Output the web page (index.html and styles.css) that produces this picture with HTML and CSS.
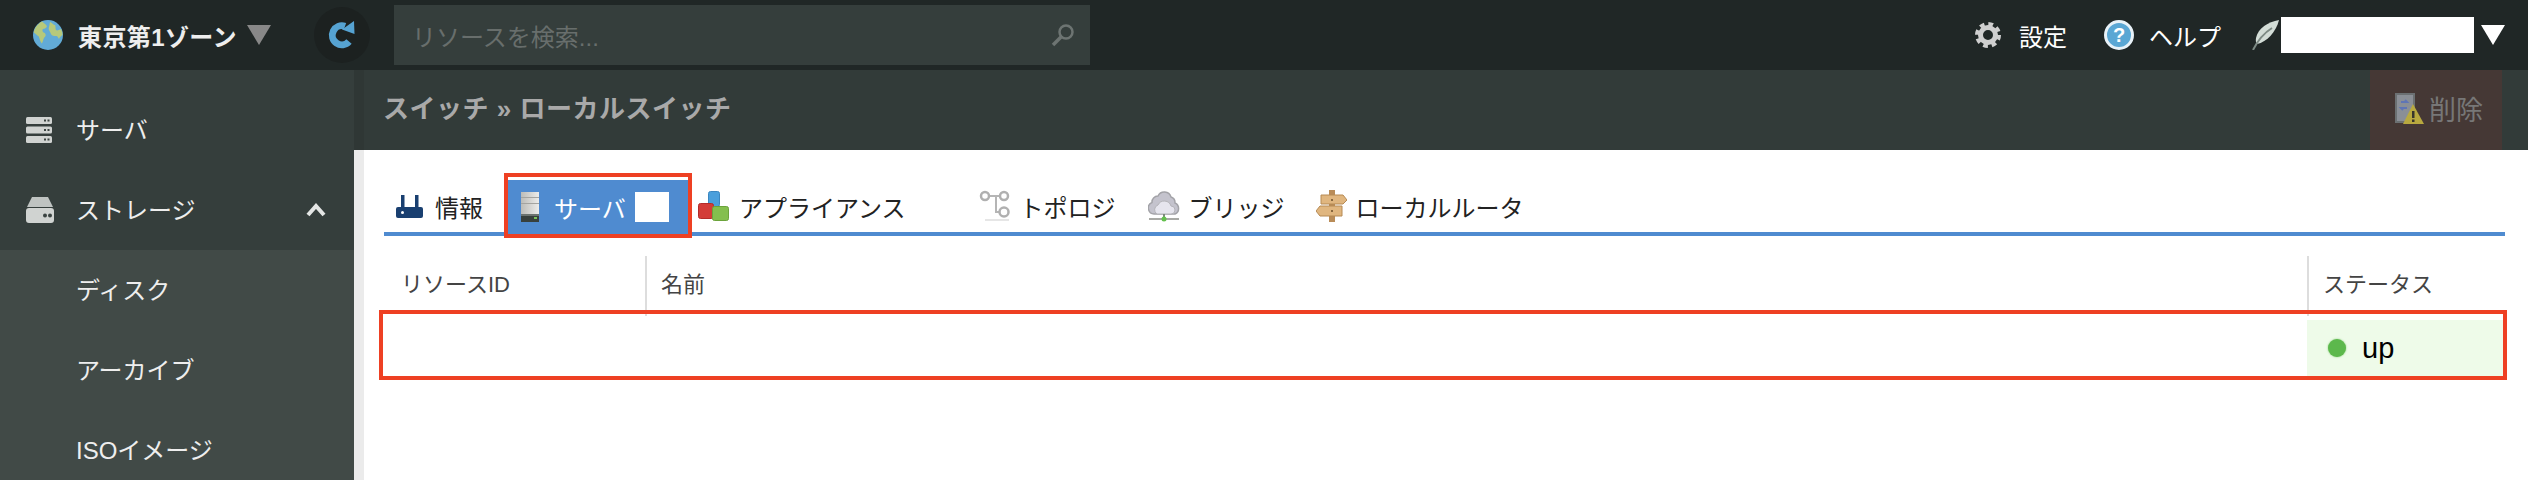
FILE: index.html
```html
<!DOCTYPE html>
<html lang="ja">
<head>
  <meta charset="UTF-8" />
  <title>ローカルスイッチ</title>
  <link rel="stylesheet" href="styles.css">
</head>
<body>
  <header class="topbar">
    <div class="zone">
      <svg class="globe" width="30" height="30" viewBox="0 0 30 30">
        <circle cx="15" cy="15" r="15" fill="#62abd6"/>
        <path d="M9 1.500C5 3.500 1.500 8 .8 12.500c2 1 3 3 5 4 1 2 1 5 3 7 1.500-2 1-4 2.500-6 1.500-1 2-3 .5-4.500-2-.5-3-2-2-4 2 0 2.500-1 4-2 .5-2-2-3-4.800-5.500z" fill="#b7c97a"/>
        <path d="M17 2c3 1 3 3 5 3 1 2 0 3 1 5 1 1 3 0 5-1 1 2 1.500 4 1.500 6-1.500 1-3 2-3.500 4-1-1-1-3-3-3s-4 0-5-2c-1-3-3-4-2-7 .5-2 .5-3 1-5z" fill="#b7c97a"/>
      </svg>
      <span class="zone-name">東京第1ゾーン</span>
      <span class="caret caret-gray"></span>
    </div>
    <div class="refresh">
      <svg width="28" height="28" viewBox="0 0 28 28">
        <path d="M21 20.500A9.500 9.500 0 1 1 17 5.300" fill="none" stroke="#56a3d2" stroke-width="7"/>
        <path d="M14 8.500 26 0 26.500 13z" fill="#56a3d2"/>
      </svg>
    </div>
    <div class="search">
      <span class="search-text">リソースを検索...</span>
      <svg width="26" height="24" viewBox="0 0 26 24">
        <circle cx="16" cy="9" r="6.500" fill="none" stroke="#6d7472" stroke-width="2.500"/>
        <path d="M11 14 3 22" stroke="#6d7472" stroke-width="3.500"/>
      </svg>
    </div>
    <nav class="usermenu">
      <a class="usermenu-item gear-item">
        <svg width="26" height="28" viewBox="0 0 26 28">
          <circle cx="13" cy="14" r="7.500" fill="none" stroke="#cfcfcf" stroke-width="5"/>
          <circle cx="13" cy="14" r="10.500" fill="none" stroke="#cfcfcf" stroke-width="5" stroke-dasharray="4.500 3.750"/>
        </svg>
        設定
      </a>
      <a class="usermenu-item help-item"><span class="help-icon">?</span>ヘルプ</a>
      <svg class="feather" width="28" height="30" viewBox="0 0 28 30">
        <path d="M27 0C16 2 6 8 4 18c-.5 3 0 5 1 6C15 22 24 12 27 0z" fill="#d3ddd7"/>
        <path d="M20 8C12 13 6 20 1 30" fill="none" stroke="#7d8a84" stroke-width="2"/>
      </svg>
      <span class="mask mask-user"></span>
      <span class="caret caret-white"></span>
    </nav>
  </header>

  <div class="main">
    <aside class="sidebar">
      <ul class="menu">
        <li class="menu-item">
          <svg width="26" height="26" viewBox="0 0 26 26">
            <g fill="#d0d3d1">
              <rect y="0" width="26" height="7" rx="1.500"/>
              <rect y="9.500" width="26" height="7" rx="1.500"/>
              <rect y="19" width="26" height="7" rx="1.500"/>
            </g>
            <g fill="#3a4341">
              <rect x="18" y="2.500" width="2" height="2"/><rect x="21.500" y="2.500" width="2" height="2"/>
              <rect x="18" y="12" width="2" height="2"/><rect x="21.500" y="12" width="2" height="2"/>
              <rect x="18" y="21.500" width="2" height="2"/><rect x="21.500" y="21.500" width="2" height="2"/>
            </g>
          </svg>
          <span>サーバ</span>
        </li>
        <li class="menu-item menu-open">
          <svg width="28" height="26" viewBox="0 0 28 26">
            <path d="M6 0H22L27 10H1z" fill="#bfc3c1"/>
            <rect x="0" y="11" width="28" height="15" rx="3" fill="#d0d3d1"/>
            <circle cx="19" cy="18.500" r="2" fill="#3a4341"/>
            <circle cx="24" cy="18.500" r="2" fill="#3a4341"/>
          </svg>
          <span>ストレージ</span>
          <svg class="chevron" width="20" height="14" viewBox="0 0 20 14">
            <path d="M2 12 10 3 18 12" fill="none" stroke="#e4e6e5" stroke-width="4"/>
          </svg>
        </li>
      </ul>
      <ul class="submenu">
        <li>ディスク</li>
        <li>アーカイブ</li>
        <li>ISOイメージ</li>
      </ul>
    </aside>

    <section class="content">
      <div class="subheader">
        <h1>スイッチ » ローカルスイッチ</h1>
        <button class="delete-btn">
          <svg width="30" height="31" viewBox="0 0 30 31">
            <rect x="1" y="0" width="20" height="30" fill="#6b7072"/>
            <rect x="3" y="2" width="16" height="26" fill="#8a8f96"/>
            <path d="M7 9h6l-2-2M13 15H7l2 2" fill="none" stroke="#5f75b5" stroke-width="2"/>
            <path d="M19 11 30 31H9z" fill="#b8a93f"/>
            <rect x="18" y="18" width="2.500" height="7" fill="#37352c"/>
            <rect x="18" y="26.500" width="2.500" height="2.500" fill="#37352c"/>
          </svg>
          削除
        </button>
      </div>

      <div class="panel">
        <div class="tabs">
          <a class="tab tab-info">
            <svg width="27" height="23" viewBox="0 0 27 23">
              <rect x="0" y="12" width="27" height="11" rx="2" fill="#193f70"/>
              <rect x="5" y="0" width="3.500" height="13" fill="#193f70"/>
              <rect x="19" y="0" width="3.500" height="13" fill="#193f70"/>
              <circle cx="6.500" cy="17.500" r="1.500" fill="#fff"/>
            </svg>
            <span>情報</span>
          </a>
          <a class="tab tab-active">
            <svg width="18" height="30" viewBox="0 0 18 30">
              <defs>
                <linearGradient id="srv" x1="0" y1="0" x2="1" y2="0">
                  <stop offset="0" stop-color="#bcbcb8"/><stop offset="1" stop-color="#ececea"/>
                </linearGradient>
              </defs>
              <rect width="18" height="22" fill="url(#srv)"/>
              <rect y="5" width="18" height="1" fill="#a4a4a0"/>
              <rect y="11" width="18" height="1" fill="#a4a4a0"/>
              <rect y="22" width="18" height="8" fill="#38403c"/>
              <rect y="22" width="18" height="2" fill="#6c736f"/>
              <rect x="13" y="25" width="3" height="2" fill="#78c25a"/>
            </svg>
            <span>サーバ</span>
            <span class="mask mask-tab"></span>
          </a>
          <a class="tab tab-appliance">
            <svg width="31" height="30" viewBox="0 0 31 30">
              <rect x="10.500" y=".5" width="11" height="15" rx="2" fill="#4a9fdc" stroke="#3a86c0"/>
              <rect x=".5" y="12.500" width="15" height="15" rx="2" fill="#d33c38" stroke="#b32c2a"/>
              <rect x="14.500" y="15.500" width="16" height="14" rx="2" fill="#84bf4e" stroke="#6ba33b"/>
            </svg>
            <span>アプライアンス</span>
          </a>
          <a class="tab tab-topology">
            <svg width="31" height="32" viewBox="0 0 31 32">
              <path d="M7 6H24M17 6V22H23" fill="none" stroke="#b5b5b5" stroke-width="2"/>
              <g fill="#fff" stroke="#b0b0b0" stroke-width="2.500">
                <circle cx="6" cy="6" r="4"/>
                <circle cx="25" cy="6" r="4"/>
                <circle cx="25" cy="22" r="4.500"/>
              </g>
              <rect x="6" y="29" width="24" height="2" fill="#e6e6e6"/>
            </svg>
            <span>トポロジ</span>
          </a>
          <a class="tab tab-bridge">
            <svg width="32" height="32" viewBox="0 0 32 32">
              <path d="M6 24a6 6 0 0 1-2-11.500A6 6 0 0 1 10 6a7 7 0 0 1 13 1 6 6 0 0 1 4 6A6 6 0 0 1 27 24z" fill="#c4c3cd" stroke="#a3a3a8" stroke-width="1.500"/>
              <path d="M9 24a5 5 0 0 1 1-9 7 7 0 0 1 13 1 4 4 0 0 1 0 8z" fill="#e6e5ee" stroke="#b4b4b9"/>
              <rect x="15" y="24" width="2" height="5" fill="#7d8a7d"/>
              <rect x="1" y="28" width="30" height="2" fill="#a9aaa6"/>
              <circle cx="16" cy="29" r="2.500" fill="#63c04d"/>
            </svg>
            <span>ブリッジ</span>
          </a>
          <a class="tab tab-router">
            <svg width="31" height="32" viewBox="0 0 31 32">
              <rect x="13" y="0" width="6" height="32" fill="#b98c58"/>
              <path d="M5 5H27L31 10 27 14H5z" fill="#e0b67f" stroke="#b68a55"/>
              <path d="M4 16H26V26H4L0 21z" fill="#e0b67f" stroke="#b68a55"/>
              <circle cx="16" cy="10" r="1" fill="#6b4c28"/>
              <circle cx="16" cy="21" r="1" fill="#6b4c28"/>
            </svg>
            <span>ローカルルータ</span>
          </a>
        </div>

        <div class="table">
          <div class="table-head">
            <div class="th th-id">リソースID</div>
            <div class="th">名前</div>
            <div class="th">ステータス</div>
          </div>
          <div class="table-row">
            <div class="td"></div>
            <div class="td"></div>
            <div class="td td-status"><span class="dot"></span>up</div>
          </div>
        </div>
      </div>
    </section>
  </div>
</body>
</html>
```
FILE: styles.css
```css
* {
  box-sizing: border-box;
}

html, body {
  height: 480px;
}

body {
  margin: 0;
  overflow: hidden;
  font-family: "Liberation Sans", "Noto Sans CJK JP", sans-serif;
  background: #fff;
}

/* top bar */
.topbar {
  display: flex;
  align-items: center;
  height: 70px;
  padding-left: 33px;
  background: #202726;
  color: #fff;
  font-size: 24px;
}

.zone {
  display: flex;
  align-items: center;
  width: 281px;
}

.zone-name {
  margin-left: 15px;
  font-weight: bold;
  letter-spacing: 0.4px;
  color: #eee;
}

.caret {
  width: 0;
  height: 0;
  border-left: 12px solid transparent;
  border-right: 12px solid transparent;
  border-top: 20px solid #888;
}

.caret-gray {
  margin-left: 10px;
}

.caret-white {
  margin-left: 7px;
  border-top-color: #fff;
}

.refresh {
  display: flex;
  align-items: center;
  justify-content: center;
  width: 56px;
  height: 56px;
  border-radius: 50%;
  background: #1c2120;
}

.search {
  display: flex;
  align-items: center;
  justify-content: space-between;
  width: 696px;
  height: 60px;
  margin-left: 24px;
  padding: 0 14px 0 18px;
  background: #353e3c;
}

.search-text {
  color: #686e6c;
}

.usermenu {
  display: flex;
  align-items: center;
  margin-left: auto;
  padding-right: 23px;
}

.usermenu-item {
  display: flex;
  align-items: center;
}

.gear-item svg {
  margin-right: 18px;
}

.help-item {
  margin-left: 37px;
}

.help-icon {
  width: 30px;
  height: 30px;
  margin-right: 15px;
  border: 3px solid #e8f2f8;
  border-radius: 50%;
  background: #5aa7d4;
  font-size: 20px;
  font-weight: bold;
  line-height: 24px;
  text-align: center;
}

.feather {
  margin-left: 31px;
}

.mask {
  display: block;
  background: #fff;
}

.mask-user {
  width: 193px;
  height: 36px;
  margin-left: 1px;
}

/* page below the bar */
.main {
  display: flex;
  height: 410px;
}

.sidebar {
  width: 354px;
  flex-shrink: 0;
  padding-top: 20px;
  background: #353e3c;
  color: #eee;
  font-size: 24px;
}

.menu, .submenu {
  margin: 0;
  padding: 0;
  list-style: none;
}

.menu-item {
  display: flex;
  align-items: center;
  height: 80px;
  padding-left: 26px;
}

.menu-item span {
  width: 180px;
  margin: 0 0 3px 24px;
}

.menu-open span {
  margin-left: 22px;
}

.chevron {
  margin-left: 50px;
}

.submenu {
  background: #414a47;
}

.submenu li {
  display: flex;
  align-items: center;
  height: 80px;
  padding: 0 0 3px 76px;
}

.content {
  flex: 1;
  min-width: 0;
}

.subheader {
  display: flex;
  align-items: center;
  justify-content: space-between;
  height: 80px;
  padding: 0 26px 0 19px;
  border-left: 10px solid #2f3735;
  background: #323b39;
}

.subheader h1 {
  margin: 0 0 7px;
  color: #a9a9a9;
  font-size: 26px;
  font-weight: bold;
  letter-spacing: 0.5px;
}

.delete-btn {
  display: flex;
  align-items: center;
  gap: 5px;
  height: 80px;
  width: 132px;
  padding: 0 0 4px 24px;
  border: none;
  background: #453835;
  color: #777;
  font-family: inherit;
  font-size: 27px;
}

.panel {
  height: 330px;
  padding: 30px 23px 0 20px;
  border-left: 10px solid #ebebeb;
  background: #fff;
}

/* tabs */
.tabs {
  display: flex;
  height: 56px;
  border-bottom: 4px solid #4f8bd0;
  color: #222;
  font-size: 24px;
}

.tab {
  display: flex;
  align-items: center;
  height: 52px;
  padding: 0 12px;
  gap: 10px;
}

.tab-info {
  width: 124px;
  gap: 12px;
}

.tab-active {
  position: relative;
  width: 180px;
  height: 54px;
  padding: 0 19px 0 13px;
  gap: 0;
  background: #4f8bd0;
  color: #fff;
}

.tab-active svg {
  margin-right: 15px;
}

.tab-active::after {
  content: "";
  position: absolute;
  top: -7px;
  left: -4px;
  right: -4px;
  bottom: -4px;
  border: 4px solid #ee4023;
}

.mask-tab {
  width: 34px;
  height: 30px;
  margin-left: 9px;
}

.tab-appliance {
  padding-left: 10px;
  gap: 10px;
}

.tab-topology {
  margin-left: 49px;
}

.tab-bridge {
  margin-left: 8px;
  gap: 9px;
}

.tab-router {
  margin-left: 7px;
  gap: 9px;
}

/* table */
.table {
  margin-top: 20px;
  font-size: 22px;
}

.table-head, .table-row {
  display: grid;
  grid-template-columns: 261px 1fr 198px;
}

.table-head {
  height: 60px;
  color: #444;
}

.th {
  padding: 16px 0 0 14px;
  border-left: 2px solid #ddd;
  line-height: 26px;
}

.th-id {
  padding-left: 17px;
  border-left: none;
}

.table-row {
  position: relative;
  height: 56px;
  margin-top: 4px;
}

.table-row::after {
  content: "";
  position: absolute;
  top: -10px;
  left: -5px;
  right: -2px;
  bottom: -4px;
  border: 4px solid #ee4023;
}

.td-status {
  display: flex;
  align-items: center;
  margin-right: 2px;
  padding-left: 21px;
  background: #eefbe9;
  color: #000;
  font-size: 29px;
}

.dot {
  width: 18px;
  height: 18px;
  margin-right: 16px;
  border-radius: 50%;
  background: #5cb84c;
  box-shadow: 0 0 2px #7cc86c;
}
```
